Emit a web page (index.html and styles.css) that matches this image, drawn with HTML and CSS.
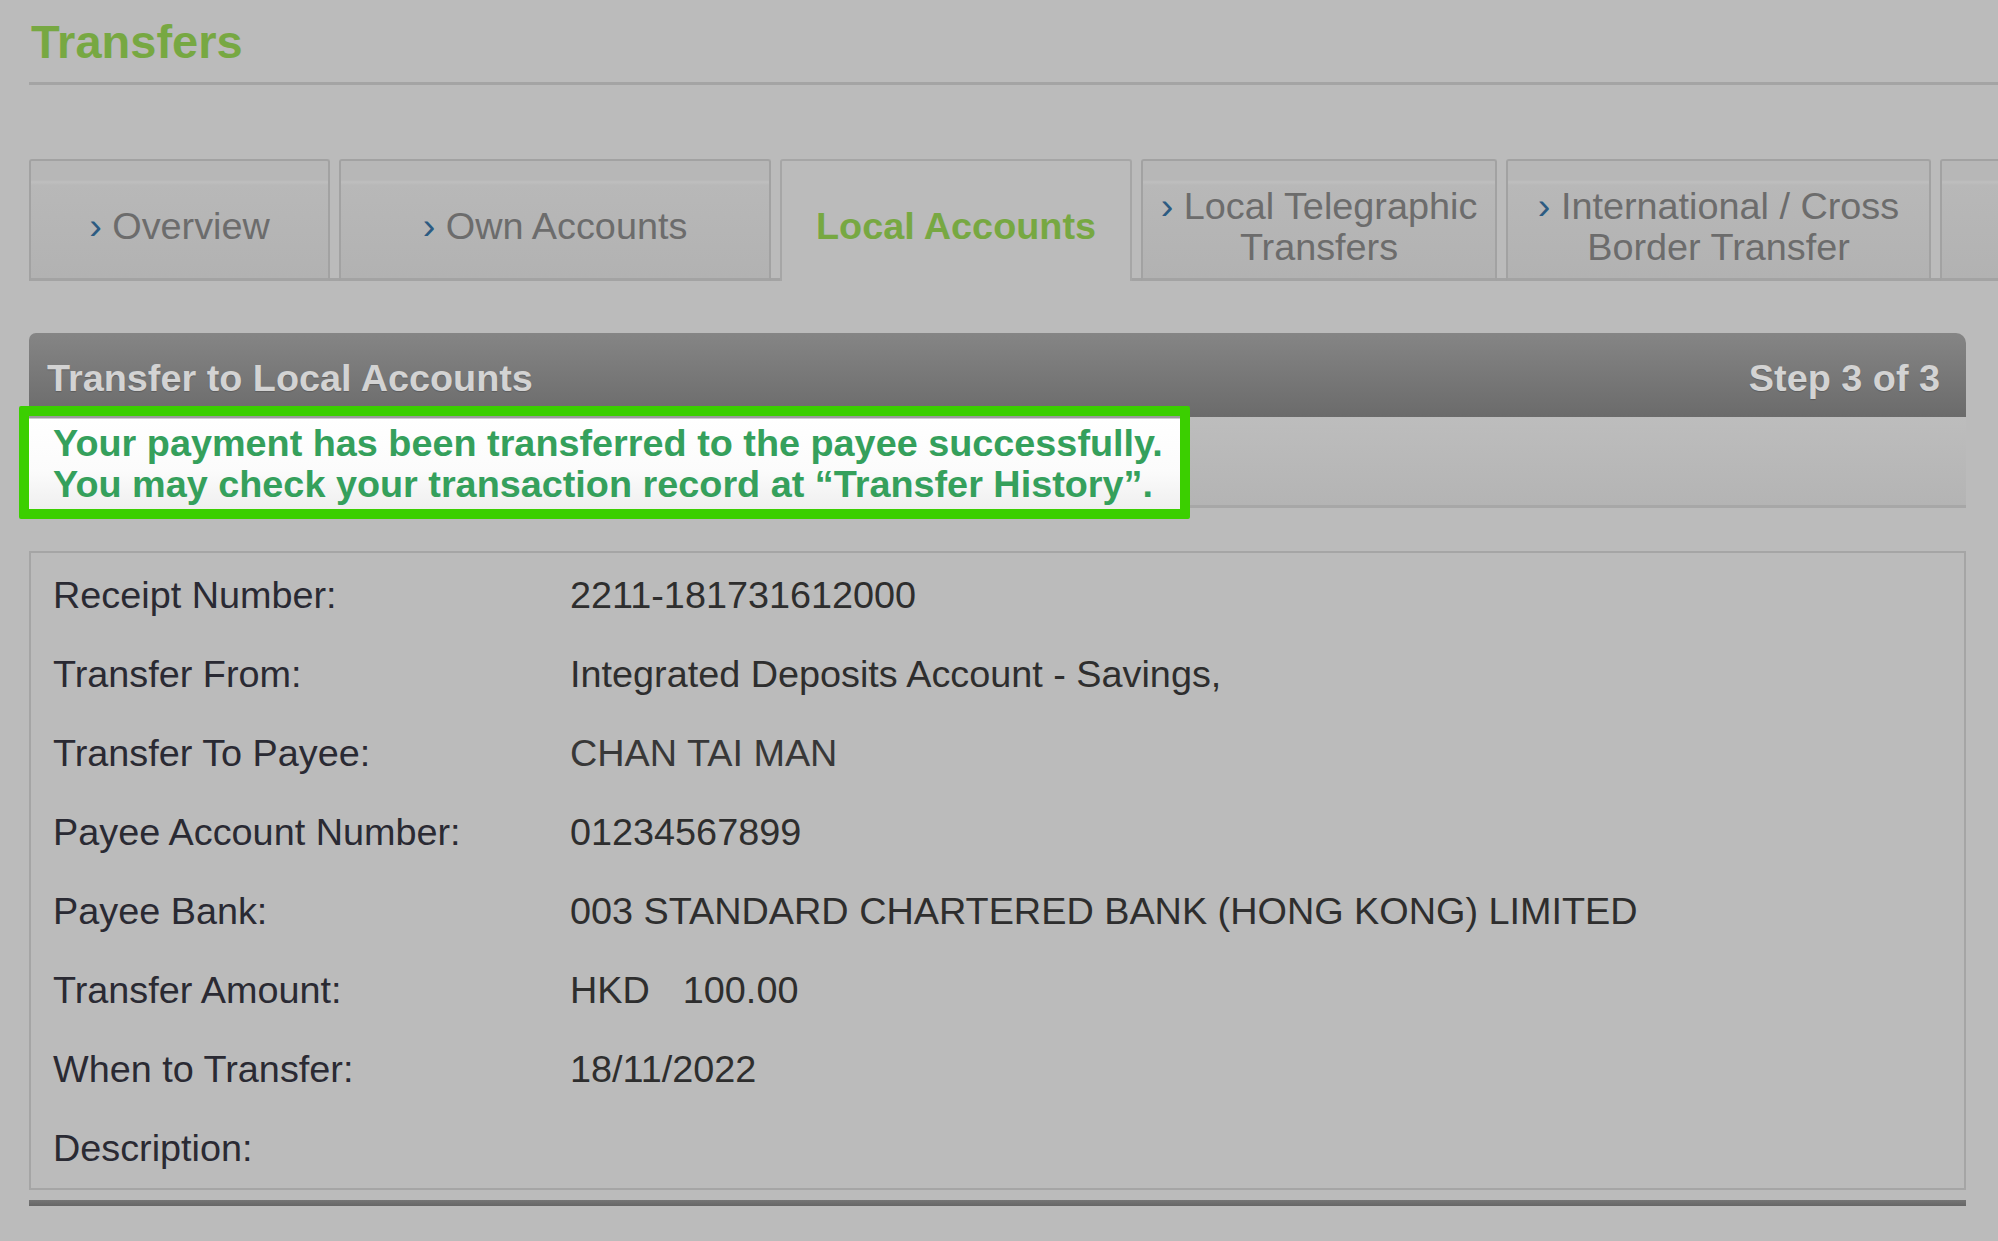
FILE: index.html
```html
<!DOCTYPE html>
<html lang="en">
<head>
<meta charset="utf-8">
<title>Transfers</title>
<link rel="stylesheet" href="styles.css">
</head>
<body>
<div class="page">
  <header class="page-head">
    <h1 class="page-title">Transfers</h1>
  </header>

  <nav class="tabs">
    <div class="tab tab-overview"><span class="tab-label"><span class="chev">›</span> Overview</span></div>
    <div class="tab tab-own"><span class="tab-label"><span class="chev">›</span> Own Accounts</span></div>
    <div class="tab tab-local active"><span class="tab-label">Local Accounts</span></div>
    <div class="tab tab-tele"><span class="tab-label"><span class="chev">›</span> Local Telegraphic<br>Transfers</span></div>
    <div class="tab tab-intl"><span class="tab-label"><span class="chev">›</span> International / Cross<br>Border Transfer</span></div>
    <div class="tab tab-more"></div>
  </nav>

  <section class="panel">
    <div class="panel-head">
      <span class="panel-title">Transfer to Local Accounts</span>
      <span class="panel-step">Step 3 of 3</span>
    </div>
    <div class="notice">
      <div class="notice-highlight"></div>
      <p class="notice-text">Your payment has been transferred to the payee successfully.<br>You may check your transaction record at “Transfer History”.</p>
    </div>

    <div class="details">
      <div class="row"><div class="label">Receipt Number:</div><div class="value">2211-181731612000</div></div>
      <div class="row"><div class="label">Transfer From:</div><div class="value">Integrated Deposits Account - Savings,</div></div>
      <div class="row"><div class="label">Transfer To Payee:</div><div class="value value-name">CHAN TAI MAN</div></div>
      <div class="row"><div class="label">Payee Account Number:</div><div class="value">01234567899</div></div>
      <div class="row"><div class="label">Payee Bank:</div><div class="value">003 STANDARD CHARTERED BANK (HONG KONG) LIMITED</div></div>
      <div class="row"><div class="label">Transfer Amount:</div><div class="value"><span class="ccy">HKD</span>100.00</div></div>
      <div class="row"><div class="label">When to Transfer:</div><div class="value">18/11/2022</div></div>
      <div class="row"><div class="label">Description:</div><div class="value"></div></div>
    </div>
    <div class="panel-foot"></div>
  </section>
</div>
</body>
</html>
```

FILE: styles.css
```css
html, body {
  margin: 0;
  padding: 0;
  background: #bbbbbb;
  overflow: hidden;
}

body {
  font-family: "Liberation Sans", Arial, sans-serif;
  color: #2e2e2e;
  width: 1998px;
  height: 1241px;
}

.page {
  padding-left: 29px;
}

/* ---------- title ---------- */
.page-head {
  padding-top: 16px;
  padding-bottom: 14px;
  border-bottom: 3px solid #a4a4a4;
}

.page-title {
  margin: 0;
  padding-left: 2px;
  font-size: 47px;
  line-height: 52px;
  font-weight: bold;
  color: #77a842;
}

/* ---------- tabs ---------- */
.tabs {
  margin-top: 74px;
  display: flex;
  align-items: flex-end;
  gap: 9px;
  height: 122px;
  overflow: hidden;
  background: linear-gradient(#a3a3a3, #a3a3a3) left bottom / 100% 3px no-repeat;
}

.tab {
  box-sizing: border-box;
  flex: none;
  height: 122px;
  border: 2px solid #a2a2a2;
  border-bottom: 3px solid #a3a3a3;
  border-radius: 3px 3px 0 0;
  background: linear-gradient(#b7b7b7 0, #b7b7b7 19px, #bfbfbf 21px, #b8b8b8 24px, #b2b2b2 100%);
  display: flex;
  align-items: center;
  justify-content: center;
  padding-top: 14px;
  text-align: center;
  font-size: 37.8px;
  line-height: 41px;
  color: #6c6c6c;
}

.tab-overview { width: 301px; }
.tab-own { width: 432px; }
.tab-local { width: 352px; }
.tab-tele { width: 356px; }
.tab-intl { width: 425px; }
.tab-more { width: 200px; }

.tabs .tab.active {
  border-color: #a6a6a6;
  border-bottom: none;
  padding-bottom: 3px;
  background: #bbbbbb;
  color: #77a842;
  font-weight: bold;
}

.chev {
  color: #2c5b82;
}

/* ---------- panel ---------- */
.panel {
  margin-top: 52px;
  margin-right: 32px;
}

.panel-head {
  box-sizing: border-box;
  height: 84px;
  display: flex;
  align-items: center;
  justify-content: space-between;
  padding: 6px 26px 0 18px;
  background: linear-gradient(#858585, #6b6b6b);
  border-radius: 7px 10px 0 0;
  font-size: 37.8px;
  font-weight: bold;
  color: #d3d3d3;
  text-shadow: 0 1px 1px rgba(0, 0, 0, 0.2);
}

.notice {
  position: relative;
  height: 88px;
  border-bottom: 3px solid #a7a7a7;
  background: linear-gradient(#bdbdbd, #b4b4b4);
}

.notice-highlight {
  position: absolute;
  left: -10px;
  top: -11px;
  width: 1171px;
  height: 113px;
  box-sizing: border-box;
  border: 10px solid #3bcf00;
  border-radius: 2px;
  background: linear-gradient(#9a9a9a 0, #9a9a9a 2px, #ffffff 3px, #fbfbfb 60%, #efefef 100%);
}

.notice-text {
  position: relative;
  margin: 0;
  padding: 6px 0 0 24px;
  font-size: 37.8px;
  line-height: 41px;
  font-weight: bold;
  color: #35a05c;
}

/* ---------- details ---------- */
.details {
  margin-top: 43px;
  border: 2px solid #a5a5a5;
  padding: 2px 0 1px 22px;
}

.row {
  display: grid;
  grid-template-columns: 517px 1fr;
  height: 79px;
  align-items: center;
  font-size: 37.8px;
  line-height: 42px;
}

.label {
  color: #2a2a33;
}

.value {
  color: #2e2e2e;
}

.value-name {
  color: #383838;
}

.ccy {
  margin-right: 33px;
}

.panel-foot {
  margin-top: 10px;
  height: 6px;
  background: linear-gradient(#757575, #666666);
}
```
